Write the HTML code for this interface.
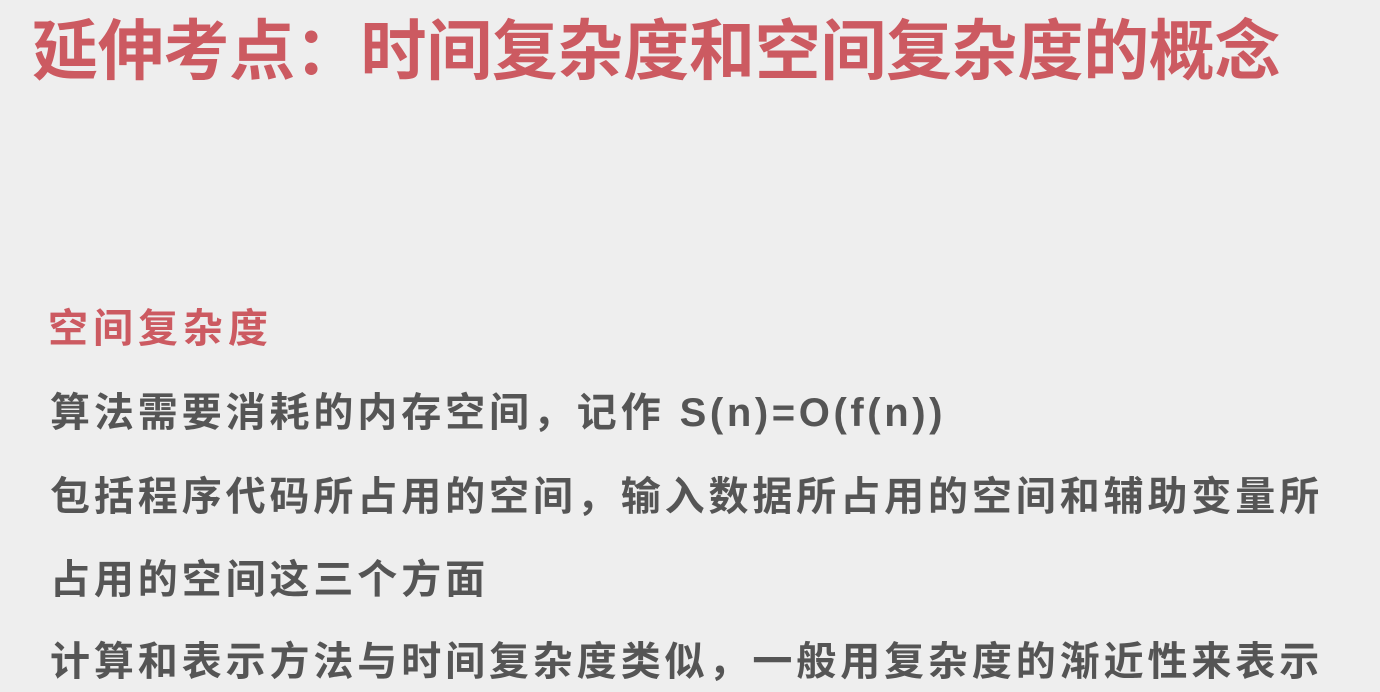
<!DOCTYPE html>
<html><head><meta charset="utf-8"><style>
html,body{margin:0;padding:0;}
body{width:1380px;height:692px;background:#eeeeee;overflow:hidden;position:relative;font-family:"Liberation Sans","Noto Sans CJK SC",sans-serif;font-weight:bold;}
div{position:absolute;white-space:nowrap;}
.t{left:32px;top:10px;font-size:66px;line-height:82px;color:#cc5a61;letter-spacing:-0.3px;}
.s{left:48px;top:304px;font-size:40px;line-height:50px;color:#cc5a61;letter-spacing:5px;}
.b{left:50px;font-size:40px;line-height:50px;color:#555;letter-spacing:3.9px;}
.l{letter-spacing:3.6px;}
</style></head><body>
<div class="t">延伸考点：时间复杂度和空间复杂度的概念</div>
<div class="s">空间复杂度</div>
<div class="b" style="top:388px">算法需要消耗的内存空间，记作 <span class="l">S(n)=O(f(n))</span></div>
<div class="b" style="top:472px">包括程序代码所占用的空间，输入数据所占用的空间和辅助变量所</div>
<div class="b" style="top:555px">占用的空间这三个方面</div>
<div class="b" style="top:637px">计算和表示方法与时间复杂度类似，一般用复杂度的渐近性来表示</div>
</body></html>
